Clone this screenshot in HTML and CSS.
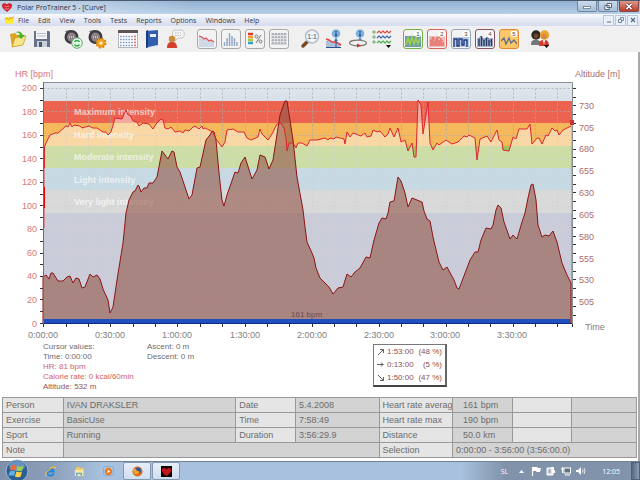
FILE: index.html
```html
<!DOCTYPE html>
<html lang="en">
<head>
    <meta charset="UTF-8">
    <meta name="viewport" content="width=device-width, initial-scale=1.0">
    <title>Polar ProTrainer 5 - [Curve]</title>
    <link rel="stylesheet" href="styles.css">
</head>
<body>
    <header class="titlebar">
        <svg class="heart" viewBox="0 0 10 9"><path d="M5 9C2 6.500 0 5 0 2.600 0 0 3.500-.5 5 1.500 6.500-.5 10 0 10 2.600 10 5 8 6.500 5 9z" fill="#d3202c"/><path d="M2.500 3l2 1 2-1 1 1M3 5.500l2 .8 2-1" stroke="#f5b6ba" stroke-width=".7" fill="none"/></svg>
        <h1>Polar ProTrainer 5 - [Curve]</h1>
        <div class="win-controls">
            <button aria-label="Minimize"><svg viewBox="0 0 8 7"><rect x=".5" y="3.500" width="7" height="2" fill="#fff" stroke="#56677d" stroke-width=".7"/></svg></button>
            <button aria-label="Restore"><svg viewBox="0 0 8 7"><path d="M3 .5h4.500v4H3zM.8 2.500h4.400v4H.8z" fill="#fff" stroke="#56677d"/></svg></button>
            <button class="close" aria-label="Close"><svg viewBox="0 0 8 7"><path d="M1.500 1l5 5M6.500 1l-5 5" stroke="#6d3a38" stroke-width="3"/><path d="M1.500 1l5 5M6.500 1l-5 5" stroke="#fff" stroke-width="1.600"/></svg></button>
        </div>
    </header>

    <nav class="menubar">
        <svg class="doc-icon" viewBox="0 0 10 8"><rect y="1" width="9" height="7" fill="#ffe92e"/><path d="M0 3.500l2-1.500 2 1.500 2-2.500 1 1.500 3-2" fill="none" stroke="#e08a20"/></svg>
        <button>File</button>
        <button>Edit</button>
        <button>View</button>
        <button>Tools</button>
        <button>Tests</button>
        <button>Reports</button>
        <button>Options</button>
        <button>Windows</button>
        <button>Help</button>
        <div class="mdi-controls">
            <button aria-label="Minimize document"><svg viewBox="0 0 6 6"><path d="M1 5h4" stroke="#5b6f88"/></svg></button>
            <button aria-label="Restore document"><svg viewBox="0 0 6 6"><path d="M2.500 2V.5h3v3H4M.5 2.500h3v3h-3z" fill="none" stroke="#5b6f88" stroke-width=".8"/></svg></button>
            <button aria-label="Close document"><svg viewBox="0 0 6 6"><path d="M1 1l4 4M5 1L1 5" stroke="#5b6f88" stroke-width="1.300"/></svg></button>
        </div>
    </nav>

    <div class="toolbar">
        <div class="group">
            <button aria-label="Open"><svg viewBox="0 0 20 20"><path d="M2 5l5-1 2 2 6-1v11L4 18z" fill="#d9a520"/><path d="M4 18L7 9l11-2-3 9z" fill="#f8e58a" stroke="#c79a26" stroke-width=".7"/><path d="M7 4c4-3 7-1 7 2h3l-4 4-3-4h2c0-2-2-3-5-2z" fill="#3fb52f"/></svg></button>
            <button aria-label="Save"><svg viewBox="0 0 20 20"><path d="M2 2h15l1 1v15H2z" fill="#66738a"/><rect x="4" y="2" width="11" height="8" fill="#f4f6fa"/><path d="M5 4.500h9M5 7h9" stroke="#b4bdca"/><rect x="5" y="12" width="10" height="6" fill="#c9d0da"/><rect x="7" y="13" width="3" height="5" fill="#4d5869"/></svg></button>
        </div>
        <div class="group">
            <button aria-label="Connect"><svg viewBox="0 0 20 20"><path d="M2 2l5-1 9 12-4 4z" fill="#74757a"/><circle cx="8.500" cy="8" r="7" fill="#3c3a40"/><circle cx="8.500" cy="8" r="4.500" fill="#8d8288"/><path d="M6 8h5" stroke="#fff" stroke-dasharray="1 1"/><circle cx="14" cy="14" r="5.300" fill="#e8f6e8" stroke="#64a96b"/><path d="M11.500 13c1-2 4-2 5 0M16.500 15.500c-1 2-4 2-5 0" fill="none" stroke="#2ca84a" stroke-width="1.500"/></svg></button>
            <button aria-label="Device settings"><svg viewBox="0 0 20 20"><path d="M2 2l5-1 9 12-4 4z" fill="#74757a"/><circle cx="8.500" cy="8" r="7" fill="#3c3a40"/><circle cx="8.500" cy="8" r="4.500" fill="#8d8288"/><path d="M6 8h5" stroke="#fff" stroke-dasharray="1 1"/><circle cx="14" cy="14" r="4.500" fill="#f0a21e" stroke="#d98a10" stroke-width="2" stroke-dasharray="2 1.500"/><circle cx="14" cy="14" r="1.600" fill="#fff6dd"/></svg></button>
        </div>
        <div class="group">
            <button aria-label="Calendar"><svg viewBox="0 0 20 20"><rect x=".5" y="1.500" width="19" height="17" fill="#fff" stroke="#b5b5b8"/><path d="M0 1h20v3H0z" fill="#5c5457"/><path d="M2 7.500h13M2 10.500h13M2 13.500h13M2 16.500h13" stroke="#7f9bc6" stroke-width="1.600" stroke-dasharray="1.700 1.100"/><path d="M17 6.500v12" stroke="#e16a5c" stroke-width="1.800" stroke-dasharray="1.700 1.300"/></svg></button>
            <button aria-label="Diary"><svg viewBox="0 0 20 20"><path d="M4 2l12-1v16L4 19z" fill="#2f5fae"/><path d="M4 2l2-1v17l-2 1z" fill="#173d7e"/><path d="M6 18l10-2v1.500L6 19z" fill="#e9edf5"/><rect x="8" y="5" width="6" height="3" fill="#e8eef8"/></svg></button>
            <button aria-label="Person"><svg viewBox="0 0 20 20"><path d="M8 1h8c3 0 3 8 0 8h-4l-3 3V9H8C6 9 6 1 8 1z" fill="#f3f3f3" stroke="#c4c4c4"/><path d="M9 4h6M9 6.500h6" stroke="#bcbcbc" stroke-dasharray="1.500 1"/><circle cx="6" cy="10" r="3.200" fill="#c98a3c"/><path d="M1 19c0-5 2-6 5-6s5 1 5 6z" fill="#d5402e"/></svg></button>
        </div>
        <div class="group">
            <button class="framed" aria-label="Curve"><svg viewBox="0 0 16 16"><path d="M0 5l3 1 2 2 2-1 3 3 2-1 3 2v5H0z" fill="#cdd9e6"/><path d="M0 5l3 1 2 2 2-1 3 3 2-1 3 2" fill="none" stroke="#de5550" stroke-width="1.200"/></svg></button>
            <button class="framed" aria-label="Bars"><svg viewBox="0 0 16 16"><path d="M1.500 15v-4M4 15V7M6.500 15V2M9 15V5M11.500 15V7M14 15v-4" stroke="#93a9c6" stroke-width="1.500"/></svg></button>
            <button class="framed" aria-label="Zones"><svg viewBox="0 0 16 16"><path d="M1 3h5" stroke="#df3a34" stroke-width="2.500"/><path d="M1 6h5" stroke="#f19c2e" stroke-width="2.500"/><path d="M1 9h5" stroke="#a4c93e" stroke-width="2.500"/><path d="M1 12h5" stroke="#3d9fc9" stroke-width="2.500"/><path d="M14 4l-5 8" stroke="#777"/><circle cx="9.500" cy="5.500" r="1.500" fill="none" stroke="#777"/><circle cx="13.500" cy="10.500" r="1.500" fill="none" stroke="#777"/></svg></button>
            <button class="framed" aria-label="Laps"><svg viewBox="0 0 16 16"><rect y="2" width="16" height="12" fill="#d3d5d8"/><path d="M0 5h16M0 8h16M0 11h16" stroke="#fff" stroke-width=".7"/><path d="M2 2v12M5 2v12M8 2v12M11 2v12M14 2v12" stroke="#878c94" stroke-dasharray="2 1"/></svg></button>
        </div>
        <div class="group">
            <button aria-label="Zoom 1:1"><svg viewBox="0 0 20 20"><path d="M8 12l-5 5" stroke="#7a4a20" stroke-width="3.500" stroke-linecap="round"/><circle cx="12" cy="7.500" r="6.500" fill="#eef4fb" stroke="#b9bfc8" stroke-width="1.500"/><text x="12" y="10" class="zoom-text">1:1</text></svg></button>
            <button aria-label="Curve information"><svg viewBox="0 0 20 20"><circle cx="12" cy="4.500" r="4.300" fill="#7fb0dc"/><path d="M12 2v1.500M12 4.500v3" stroke="#174a80" stroke-width="1.600"/><path d="M12 8l-2 4h4z" fill="#5d92c4"/><path d="M2 12l3-1 3 2 4-1 4 3v4H2z" fill="#aebfd8"/><path d="M2 10l3 1 3 2 4 0 5 3" fill="none" stroke="#df4540" stroke-width="1.500"/><path d="M2 18.500h15M12 11v7" stroke="#2c4f8d"/></svg></button>
            <button aria-label="Selection information"><svg viewBox="0 0 20 20"><circle cx="12" cy="4.500" r="4.300" fill="#7fb0dc"/><path d="M12 2v1.500M12 4.500v3" stroke="#174a80" stroke-width="1.600"/><path d="M12 8l-2 3h4z" fill="#5d92c4"/><ellipse cx="10" cy="14" rx="8.500" ry="2.800" fill="none" stroke="#7b7774" stroke-width="1.200"/><path d="M9 14.500l4 2-4 2z" fill="#cf2c24"/></svg></button>
            <button aria-label="Curves"><svg viewBox="0 0 20 20"><path d="M1 2h2v2H1zM1 7h2v2H1zM1 12h2v2H1z" fill="none" stroke="#5aa05a" stroke-width=".8"/><path d="M5 4l2-2 2 2 2-2 2 2 2-2 2 2 2-2" fill="none" stroke="#e0473f" stroke-width="1.200"/><path d="M5 9l2-2 2 2 2-2 2 2 2-2 2 2 2-2" fill="none" stroke="#3c64a8" stroke-width="1.200"/><path d="M5 14l2-2 2 2 2-2 2 2 2-2 2 2 2-2" fill="none" stroke="#48b04a" stroke-width="1.200"/><path d="M14 16h5l-2.500 3z" fill="#000"/></svg></button>
        </div>
        <div class="group">
            <button class="preset green" aria-label="View 1"><svg viewBox="0 0 16 16"><path d="M0 5h16v11H0z" fill="#6b9dab"/><path d="M1 14l2-7 2 6 2-7 2 7 2-6 2 6 2-6" fill="none" stroke="#9fd04a" stroke-width="1.600"/><circle cx="13" cy="2.500" r="3.500" fill="#fff"/><text x="13" y="5">1</text></svg></button>
            <button class="preset red" aria-label="View 2"><svg viewBox="0 0 16 16"><path d="M0 5h16v11H0z" fill="#f2bcb6"/><path d="M2 15V9M4 15V6M6 15V10M8 15V6M10 15V9M12 15V8M14 15V11" stroke="#df5a52" stroke-width="1.200"/><path d="M1 10l3-4 3 4 3-4 4 4" fill="none" stroke="#e5726a"/><circle cx="13" cy="2.500" r="3.500" fill="#fff"/><text x="13" y="5">2</text></svg></button>
            <button class="preset blue" aria-label="View 3"><svg viewBox="0 0 16 16"><path d="M0 6h16v10H0z" fill="#b9c9e4"/><path d="M1 16V8h3v7h2V8h3v6h2V9h3v7" fill="none" stroke="#1d3b84" stroke-width="1.400"/><circle cx="13" cy="2.500" r="3.500" fill="#fff"/><text x="13" y="5">3</text></svg></button>
            <button class="preset maroon" aria-label="View 4"><svg viewBox="0 0 16 16"><path d="M0 7h16v9H0z" fill="#a9b9d3"/><path d="M2 15V8M4.500 15V5M7 15V9M9.500 15V7M12 15V9M14.500 15V8" stroke="#24365f" stroke-width="1.400"/><path d="M1 9l3-4 3 5 3-4 4 5" fill="none" stroke="#3d4f78" stroke-width=".7"/><circle cx="13" cy="2.500" r="3.500" fill="#fff"/><text x="13" y="5">4</text></svg></button>
            <button class="preset orange" aria-label="View 5"><svg viewBox="0 0 16 16"><path d="M0 3h16v13H0z" fill="#fbc669"/><path d="M0 10l3-3 2 6 3-6 2 5 3-3 3 4" fill="none" stroke="#5d6f86" stroke-width="1.300"/><circle cx="13" cy="2.500" r="3.500" fill="#fff"/><text x="13" y="5">5</text></svg></button>
        </div>
        <div class="group">
            <button aria-label="Persons"><svg viewBox="0 0 20 20"><circle cx="6" cy="6" r="4.700" fill="#2d2421"/><circle cx="6" cy="7" r="2.500" fill="#6d4433"/><path d="M1 16c0-5 2-5 5-5s5 1 5 5z" fill="#76777b"/><circle cx="14.500" cy="6" r="4.700" fill="#e9a52e"/><circle cx="14" cy="7.500" r="2.700" fill="#d48a45"/><path d="M9 17c0-5 2-6 5-6s5 1 5 6z" fill="#d43a2c"/><path d="M13 11l1 5 1-5z" fill="#fff"/><path d="M14 16h5l-2.500 3z" fill="#000"/></svg></button>
        </div>
    </div>

    <main class="curve">
        <svg class="chart" viewBox="0 52 637 290" role="img" aria-label="Heart rate and altitude curve">
            <defs>
                <linearGradient id="sky" x1="0" y1="0" x2="0" y2="1"><stop offset="0" stop-color="#e3e8ef"/><stop offset="1" stop-color="#d9dfe8"/></linearGradient>
            </defs>

            <!-- intensity zones -->
            <rect x="43" y="82" width="529" height="19" fill="url(#sky)"/>
            <rect x="43" y="101" width="529" height="22" fill="#ec6350"/>
            <rect x="43" y="123" width="529" height="23" fill="#f5b95b"/>
            <rect x="43" y="146" width="529" height="22" fill="#a4c15d"/>
            <rect x="43" y="168" width="529" height="22" fill="#99bacb"/>
            <rect x="43" y="190" width="529" height="23" fill="#bababa"/>
            <rect x="43" y="213" width="529" height="110" fill="#9ea4bb"/>

            <path class="grid" d="M66 88V323M88 88V323M110 88V323M133 88V323M155 88V323M177 88V323M200 88V323M222 88V323M245 88V323M267 88V323M289 88V323M312 88V323M334 88V323M356 88V323M379 88V323M401 88V323M423 88V323M446 88V323M468 88V323M490 88V323M513 88V323M535 88V323M557 88V323"/>
            <path class="grid" d="M43 88H572M43 111H572M43 135H572M43 159H572M43 182H572M43 206H572M43 229H572M43 253H572M43 276H572M43 300H572"/>

            <!-- heart rate -->
            <path class="hr-area" d="M44 323L44 148 46 143 50 135 55 133 58 133 66 126 68 127 70 123 72 127 74 125 80 126 82 128 89 126 93 128 97 128 103 132 106 132 108 135 111 132 115 118 122 119 126 110 128 115 130 115 133 121 137 122 139 126 143 123 149 124 153 129 156 124 161 119 163 120 165 128 168 129 171 127 175 132 180 131 183 133 185 130 189 131 193 127 195 126 199 129 202 126 203 129 205 128 209 130 213 132 216 139 222 147 225 142 227 130 233 129 238 132 244 132 247 138 251 140 258 137 260 129 262 134 268 140 272 134 277 124 281 123 284 128 286 138 287 151 289 143 293 143 296 148 298 143 302 143 307 146 310 140 317 140 325 138 328 140 330 138 334 139 336 137 344 139 345 144 347 132 350 137 353 133 361 136 365 133 367 137 371 136 373 130 377 132 380 131 385 137 388 134 390 128 394 137 398 128 401 142 405 140 408 151 412 143 414 157 416 157 418 100 421 105 423 134 428 102 430 143 433 150 437 143 439 145 446 140 452 144 458 142 464 136 467 137 469 135 475 138 477 160 480 139 487 136 491 142 497 130 499 140 502 142 503 150 509 151 513 137 516 139 519 129 527 129 530 124 532 144 537 138 539 138 542 144 546 135 548 136 552 128 555 131 557 130 559 135 563 130 571 126L571 323z"/>

            <g class="zone-label">
                <text x="74" y="115">Maximum intensity</text>
                <text x="74" y="138">Hard intensity</text>
                <text x="74" y="160">Moderate intensity</text>
                <text x="74" y="183">Light intensity</text>
                <text x="74" y="205">Very light intensity</text>
            </g>

            <!-- altitude -->
            <path class="altitude" d="M43 323L43 277 46 275 49 279 51 273 53 273 58 281 63 281 67 277 70 276 73 283 76 278 79 279 82 288 85 287 90 274 93 277 97 275 100 279 103 289 108 300 110 313 113 307 117 280 123 243 126 213 129 200 133 192 135 191 138 185 139 186 141 192 144 188 147 188 149 183 153 183 157 177 162 151 168 159 172 151 174 152 177 167 180 172 185 187 189 199 192 195 197 168 200 167 206 140 210 135 212 131 214 132 216 140 219 173 222 200 224 206 227 195 235 172 238 173 241 163 245 157 252 179 257 170 260 155 265 157 269 169 273 160 280 115 285 101 287 101 293 140 297 177 303 210 305 227 307 242 312 253 314 258 316 268 320 278 329 287 333 294 338 288 343 287 347 274 351 277 355 272 360 268 366 257 370 258 374 240 379 223 382 218 386 219 388 213 390 202 394 201 398 177 401 181 405 193 408 207 412 198 417 200 422 202 424 211 427 219 430 221 433 237 439 262 443 270 447 267 454 280 457 288 459 289 470 260 475 252 478 252 481 240 486 228 491 229 493 225 496 210 498 205 501 208 504 222 510 239 513 235 517 239 522 222 525 213 528 198 531 185 533 184 536 200 538 225 542 237 545 235 549 236 553 231 557 242 562 263 567 275 571 283L571 323z"/>
            <path class="hr-line" d="M44 148L46 143 50 135 55 133 58 133 66 126 68 127 70 123 72 127 74 125 80 126 82 128 89 126 93 128 97 128 103 132 106 132 108 135 111 132 115 118 122 119 126 110 128 115 130 115 133 121 137 122 139 126 143 123 149 124 153 129 156 124 161 119 163 120 165 128 168 129 171 127 175 132 180 131 183 133 185 130 189 131 193 127 195 126 199 129 202 126 203 129 205 128 209 130 213 132 216 139 222 147 225 142 227 130 233 129 238 132 244 132 247 138 251 140 258 137 260 129 262 134 268 140 272 134 277 124 281 123 284 128 286 138 287 151 289 143 293 143 296 148 298 143 302 143 307 146 310 140 317 140 325 138 328 140 330 138 334 139 336 137 344 139 345 144 347 132 350 137 353 133 361 136 365 133 367 137 371 136 373 130 377 132 380 131 385 137 388 134 390 128 394 137 398 128 401 142 405 140 408 151 412 143 414 157 416 157 418 100 421 105 423 134 428 102 430 143 433 150 437 143 439 145 446 140 452 144 458 142 464 136 467 137 469 135 475 138 477 160 480 139 487 136 491 142 497 130 499 140 502 142 503 150 509 151 513 137 516 139 519 129 527 129 530 124 532 144 537 138 539 138 542 144 546 135 548 136 552 128 555 131 557 130 559 135 563 130 571 126"/>

            <text x="291" y="317" class="average">161 bpm</text>
            <rect x="43" y="319" width="527" height="5" fill="#1f4fbf"/>
            <path d="M43 323.500H572" stroke="#0c2c80"/>

            <!-- axes -->
            <path d="M43 82.500H572.500V324" fill="none" stroke="#8b9097"/>
            <path d="M43.500 82V324" stroke="#6d6d70"/>
            <path d="M44.500 147V168" stroke="#dc2430"/>
            <path d="M44.500 168V228" stroke="#d08a96"/>
            <path d="M44.500 187V208" stroke="#e80000"/>
            <path class="ticks" d="M40 88.500H43M40 100.500H43M40 111.500H43M40 123.500H43M40 135.500H43M40 147.500H43M40 158.500H43M40 170.500H43M40 182.500H43M40 194.500H43M40 205.500H43M40 217.500H43M40 229.500H43M40 241.500H43M40 253.500H43M40 264.500H43M40 276.500H43M40 288.500H43M40 299.500H43M40 311.500H43M40 323.500H43"/>
            <path class="ticks" d="M573 88.500H576M573 97.500H576M573 105.500H576M573 114.500H576M573 123.500H576M573 131.500H576M573 140.500H576M573 149.500H576M573 157.500H576M573 166.500H576M573 175.500H576M573 184.500H576M573 192.500H576M573 201.500H576M573 210.500H576M573 218.500H576M573 227.500H576M573 236.500H576M573 244.500H576M573 253.500H576M573 262.500H576M573 271.500H576M573 279.500H576M573 288.500H576M573 297.500H576M573 306.500H576M573 315.500H576"/>
            <path class="ticks" d="M43.500 324V327M66.500 324V327M88.500 324V327M110.500 324V327M133.500 324V327M155.500 324V327M177.500 324V327M200.500 324V327M222.500 324V327M245.500 324V327M267.500 324V327M289.500 324V327M312.500 324V327M334.500 324V327M356.500 324V327M379.500 324V327M401.500 324V327M423.500 324V327M446.500 324V327M468.500 324V327M490.500 324V327M513.500 324V327M535.500 324V327M557.500 324V327M572.500 324V327"/>
            <rect x="570" y="120" width="4" height="5" fill="#c8342f"/>

            <g class="hr-axis">
                <text x="15" y="77" class="axis-title">HR [bpm]</text>
                <text x="37" y="91">200</text>
                <text x="37" y="115">180</text>
                <text x="37" y="138">160</text>
                <text x="37" y="162">140</text>
                <text x="37" y="185">120</text>
                <text x="37" y="209">100</text>
                <text x="37" y="232">80</text>
                <text x="37" y="256">60</text>
                <text x="37" y="279">40</text>
                <text x="37" y="303">20</text>
                <text x="37" y="327">0</text>
            </g>
            <g class="alt-axis">
                <text x="575" y="77">Altitude [m]</text>
                <text x="579" y="109">730</text>
                <text x="579" y="131">705</text>
                <text x="579" y="152">680</text>
                <text x="579" y="174">655</text>
                <text x="579" y="196">630</text>
                <text x="579" y="218">605</text>
                <text x="579" y="240">580</text>
                <text x="579" y="262">555</text>
                <text x="579" y="283">530</text>
                <text x="579" y="305">505</text>
            </g>
            <g class="time-axis">
                <text x="43" y="338">0:00:00</text>
                <text x="110" y="338">0:30:00</text>
                <text x="177" y="338">1:00:00</text>
                <text x="245" y="338">1:30:00</text>
                <text x="312" y="338">2:00:00</text>
                <text x="379" y="338">2:30:00</text>
                <text x="445" y="338">3:00:00</text>
                <text x="512" y="338">3:30:00</text>
                <text x="595" y="330">Time</text>
            </g>
        </svg>

        <section class="readout">
            <div class="cursor-values">
                <p>Cursor values:</p>
                <p>Time: 0:00:00</p>
                <p class="hr">HR: 81 bpm</p>
                <p class="hr">Calorie rate: 0 kcal/60min</p>
                <p class="alt">Altitude: 532 m</p>
            </div>
            <div class="climb">
                <p>Ascent: 0 m</p>
                <p>Descent: 0 m</p>
            </div>
            <ul class="slopes">
                <li><svg viewBox="0 0 7 7"><path d="M1 6l5-5M3 .5h3.500V4"/></svg><span>1:53:00</span><span class="share">(48 %)</span></li>
                <li><svg viewBox="0 0 7 7"><path d="M0 3.500h6M4 1.500l2 2-2 2"/></svg><span>0:13:00</span><span class="share">(5 %)</span></li>
                <li><svg viewBox="0 0 7 7"><path d="M1 1l5 5M3 6.500h3.500V3"/></svg><span>1:50:00</span><span class="share">(47 %)</span></li>
            </ul>
        </section>

        <table class="summary">
            <colgroup>
                <col class="c-label"><col class="c-name"><col class="c-short"><col class="c-value">
                <col class="c-stat"><col class="c-short"><col class="c-short"><col class="c-last">
            </colgroup>
            <tr><th>Person</th><td>IVAN DRAKSLER</td><th>Date</th><td>5.4.2008</td><th>Heart rate averag</th><td class="num">161 bpm</td><th></th><td></td></tr>
            <tr><th>Exercise</th><td>BasicUse</td><th>Time</th><td>7:58:49</td><th>Heart rate max</th><td class="num">190 bpm</td><th></th><td></td></tr>
            <tr><th>Sport</th><td>Running</td><th>Duration</th><td>3:56:29.9</td><th>Distance</th><td class="num">50.0 km</td><th></th><td></td></tr>
            <tr><th>Note</th><td colspan="3"></td><th>Selection</th><td colspan="3">0:00:00 - 3:56:00 (3:56:00.0)</td></tr>
        </table>
    </main>

    <footer class="taskbar">
        <button class="start" aria-label="Start"><svg viewBox="0 0 24 24"><circle cx="12" cy="12" r="11" fill="#2d5f95" stroke="#9db9d6"/><ellipse cx="12" cy="7" rx="8" ry="5" fill="#7fa9d0" opacity=".7"/><path d="M6 7c2-1.500 3.500-1.500 5.500-.3L10.500 11.500c-2-1-3.500-1-5.500 0z" fill="#ef6a3a"/><path d="M12.500 7c2 1 4 1 6-.3l-1.300 4.800c-2 1-4 1-5.700 0z" fill="#9cce4a"/><path d="M4.700 12.500c2-1 3.500-1 5.500 0L9 17c-2-1-3.500-1-5.500.2z" fill="#5bb3ea"/><path d="M11.300 12.500c2 1 4 1 5.700 0L15.700 17.500c-2 1-4 1-5.700 0z" fill="#fbd047"/></svg></button>
        <button class="task" aria-label="Internet Explorer"><svg viewBox="0 0 12 12"><path d="M9.500 8A3.600 3.600 0 1 1 9.600 6H4" fill="none" stroke="#2287dc" stroke-width="2"/><path d="M1 11C-1 9 5 1 11 1c1 .3 0 2 0 2" fill="none" stroke="#f0bd3a" stroke-width="1.200"/></svg></button>
        <button class="task" aria-label="Explorer"><svg viewBox="0 0 12 12"><path d="M2 1h4l1 1h4v9H2z" fill="#e9c765"/><path d="M1 4h9v7H1z" fill="#f8e7a5"/><path d="M3 11V8h5v3" fill="none" stroke="#6ba6d2" stroke-width="1.500"/></svg></button>
        <button class="task" aria-label="Media Player"><svg viewBox="0 0 12 12"><rect x="1" y="1" width="10" height="9" rx="1" fill="#c6ddf1" stroke="#6aa1d1"/><circle cx="6" cy="6" r="4" fill="#ee7a1c"/><path d="M5 4l3 2-3 2z" fill="#fff"/></svg></button>
        <button class="task open" aria-label="Firefox"><svg viewBox="0 0 12 12"><circle cx="6" cy="6" r="5.500" fill="#e26a14"/><circle cx="6.500" cy="5" r="3.300" fill="#2d56a5"/><path d="M1 3c2-1 4 0 4 2l3 1c0 3-4 4-6 2z" fill="#f6a52c"/></svg></button>
        <button class="task open" aria-label="Polar ProTrainer"><svg viewBox="0 0 12 12"><rect width="12" height="12" fill="#0c0505"/><path d="M6 11C2.500 8 1 7 1 4.500 1 1.500 4.500 1.500 6 3.500 7.500 1.500 11 1.500 11 4.500 11 7 9.500 8 6 11z" fill="#c4151c"/></svg></button>
        <div class="tray">
            <span class="lang">SL</span>
            <svg viewBox="0 0 10 10"><path d="M3 7h5L5.500 4z" fill="#fff"/></svg>
            <svg viewBox="0 0 10 10"><path d="M1.500 1v9" stroke="#fff" stroke-width="1.200"/><path d="M2 1h4l1 1h3L9 6H5.500L5 5H2z" fill="#fff"/></svg>
            <svg viewBox="0 0 10 10"><path d="M1 2h6v7H1z" fill="#dfe5ec" stroke="#fff"/><path d="M5 1h3v3h1v3H6V5" fill="#fff"/><path d="M2.500 4h2M2.500 6h2" stroke="#5f6f86"/></svg>
            <svg viewBox="0 0 10 10"><rect x="3" y="2" width="6.500" height="5" fill="#5f6f86" stroke="#fff"/><path d="M4 9h5M1.500 1v6M0 3h3" stroke="#fff"/></svg>
            <svg viewBox="0 0 10 10"><path d="M0 4h2l3-3v8L2 6H0z" fill="#fff"/><path d="M6.500 3.500q1 1.500 0 3M8 2q2 3 0 6" fill="none" stroke="#fff" stroke-width=".8"/></svg>
            <time>12:05</time>
        </div>
        <button class="show-desktop" aria-label="Show desktop"></button>
    </footer>
</body>
</html>
```
FILE: styles.css
```css
* {
    box-sizing: border-box;
}
body {
    margin: 0;
    min-height: 100vh;
    display: flex;
    flex-direction: column;
    font-family: "Liberation Sans", Arial, sans-serif;
    font-size: 9px;
    color: #808080;
    background: #fff;
}
button {
    padding: 0;
    border: none;
    background: none;
    font: inherit;
    color: inherit;
}
svg {
    display: block;
}
p, ul, h1 {
    margin: 0;
    padding: 0;
}

/* title bar */
.titlebar {
    display: flex;
    align-items: center;
    height: 14px;
    padding: 0 1px 0 2px;
    gap: 5px;
    border-top: 1px solid #4a5a6c;
    background: linear-gradient(90deg, rgba(230, 238, 247, .5), rgba(230, 238, 247, .4) 15%, transparent 30%), linear-gradient(#92b0d2, #b7cfe8);
}
.titlebar h1 {
    flex: 1;
    font: 7px "Open Sans", sans-serif;
    color: #26303c;
}
.heart {
    width: 10px;
    height: 9px;
}
.win-controls {
    display: flex;
    gap: 1px;
    align-self: flex-start;
}
.win-controls button {
    display: flex;
    align-items: center;
    justify-content: center;
    width: 20px;
    height: 11px;
    border: 1px solid #71869f;
    border-top: none;
    border-radius: 0 0 2px 2px;
    background: linear-gradient(#cbdaea, #a7bfda);
}
.win-controls svg {
    width: 8px;
    height: 7px;
}
.win-controls .close {
    background: linear-gradient(#dd9a8c, #bf3c28);
    border-color: #7c4a49;
}

/* menu */
.menubar {
    display: flex;
    align-items: center;
    height: 12px;
    padding: 0 2px 0 5px;
    gap: 9px;
    font: 7px "Open Sans", sans-serif;
    color: #3c3c40;
    background: linear-gradient(#fafbfe, #e4e8f5 50%, #d6dcef);
}
.doc-icon {
    width: 9px;
    height: 8px;
    margin-right: -5px;
}
.mdi-controls {
    display: flex;
    gap: 1px;
    margin-left: auto;
}
.mdi-controls button {
    display: flex;
    align-items: center;
    justify-content: center;
    width: 11px;
    height: 11px;
    border: 1px solid #b9c6dc;
    background: #eaf0fa;
}
.mdi-controls svg {
    width: 6px;
    height: 6px;
}

/* toolbar */
.toolbar {
    display: flex;
    align-items: center;
    height: 26px;
    padding: 0 8px;
    gap: 11px;
    background: #f0f0f0;
}
.group {
    display: flex;
    gap: 4px;
}
.group button {
    width: 20px;
    height: 20px;
}
.group svg {
    width: 100%;
    height: 100%;
}
.group .framed, .group .preset {
    padding: 1px;
    border: 1px solid #a9a9ac;
    border-radius: 3px;
    background: #f3f3f4;
}
.preset text {
    font-size: 6px;
    text-anchor: middle;
    fill: #444;
}
.group .green { border-color: #78b043; }
.group .red { border-color: #d9625c; }
.group .blue { border-color: #97a5b9; }
.group .maroon { border-color: #8a5560; }
.group .orange { border-color: #dc8a2c; background: #fbc669; }
.zoom-text {
    font-size: 7px;
    text-anchor: middle;
    fill: #555;
}

/* curve window */
.curve {
    flex: 1;
    border-right: 2px solid #a9a9a9;
    padding-right: 1px;
}
.chart {
    width: 100%;
    font-size: 9px;
}
.grid {
    fill: none;
    stroke: #a8a8ac;
    stroke-opacity: .75;
    stroke-dasharray: 2 2;
    transform: translate(0.5px, 0.5px);
}
.hr-area {
    fill: #fff;
    fill-opacity: .45;
}
.hr-line {
    fill: none;
    stroke: #dc2430;
}
.altitude {
    fill: #935548;
    fill-opacity: .6;
    stroke: #8c1414;
}
.zone-label {
    font-weight: bold;
    fill: #fff;
    fill-opacity: .65;
}
.ticks {
    stroke: #333;
}
.hr-axis {
    fill: #d87878;
    text-anchor: end;
}
.hr-axis .axis-title {
    text-anchor: start;
}
.alt-axis {
    fill: #a86e6e;
}
.time-axis {
    fill: #808080;
    text-anchor: middle;
}
.average {
    font-size: 8px;
    fill: #6c4c4a;
}

.readout {
    display: flex;
    height: 55px;
    padding-left: 43px;
    font-size: 8px;
    line-height: 10px;
    color: #6c6c6c;
}
.cursor-values {
    width: 104px;
}
.readout .hr {
    color: #cf5f62;
}
.readout .alt {
    color: #925656;
}
.climb {
    width: 226px;
}
.slopes {
    display: flex;
    flex-direction: column;
    justify-content: space-around;
    width: 74px;
    height: 43px;
    margin-top: 2px;
    padding: 1px 3px;
    list-style: none;
    white-space: nowrap;
    border: 1px solid #777;
    border-right: 2px solid #666;
    border-bottom: 2px solid #444;
    color: #8e4f50;
}
.slopes li {
    display: flex;
    align-items: center;
    gap: 3px;
}
.slopes svg {
    width: 7px;
    height: 7px;
    fill: none;
    stroke: #333;
    stroke-width: .8;
}
.share {
    margin-left: auto;
}

/* exercise summary */
.summary {
    width: calc(100% - 2px);
    margin-left: 2px;
    table-layout: fixed;
    border-collapse: collapse;
    border: 1px solid #999;
    color: #6c6c6c;
}
.summary th, .summary td {
    height: 15px;
    padding: 0 0 0 3px;
    border: 1px solid #999;
    line-height: 14px;
    font-weight: normal;
    text-align: left;
    white-space: nowrap;
    overflow: hidden;
}
.summary th {
    background: #e5e5e5;
}
.summary td {
    background: #d3d3d3;
}
.summary .num {
    padding-left: 10px;
}
.c-label { width: 9.6%; }
.c-name { width: 27.2%; }
.c-short { width: 9.4%; }
.c-value { width: 13.2%; }
.c-stat { width: 11.6%; }
.c-last { width: 10.2%; }

/* taskbar */
.taskbar {
    display: flex;
    align-items: center;
    height: 19px;
    padding-left: 5px;
    border-top: 1px solid #6f8296;
    background: linear-gradient(90deg, #7f90aa, #8c9fbb 8%, #a7c1de 16%, #a7c1de 72%, #8192ab 79%);
}
.start {
    width: 24px;
    height: 24px;
    margin-right: 7px;
}
.task {
    display: flex;
    align-items: center;
    justify-content: center;
    width: 28px;
    height: 18px;
    margin-right: 1px;
}
.task svg {
    width: 11px;
    height: 11px;
}
.task.open {
    border: 1px solid #8298b3;
    border-radius: 2px;
    background: linear-gradient(#e6eef8, #cfdeef);
}
.tray {
    display: flex;
    align-items: center;
    gap: 5px;
    margin-left: auto;
    font: 7px "Open Sans", sans-serif;
    color: #fff;
}
.tray svg {
    width: 10px;
    height: 10px;
}
.tray .lang {
    margin-right: 3px;
}
.tray time {
    margin: 0 11px;
}
.show-desktop {
    width: 9px;
    height: 18px;
    border: 1px solid #4f6079;
    background: linear-gradient(90deg, #56677f, #8b9cb5);
}
```
